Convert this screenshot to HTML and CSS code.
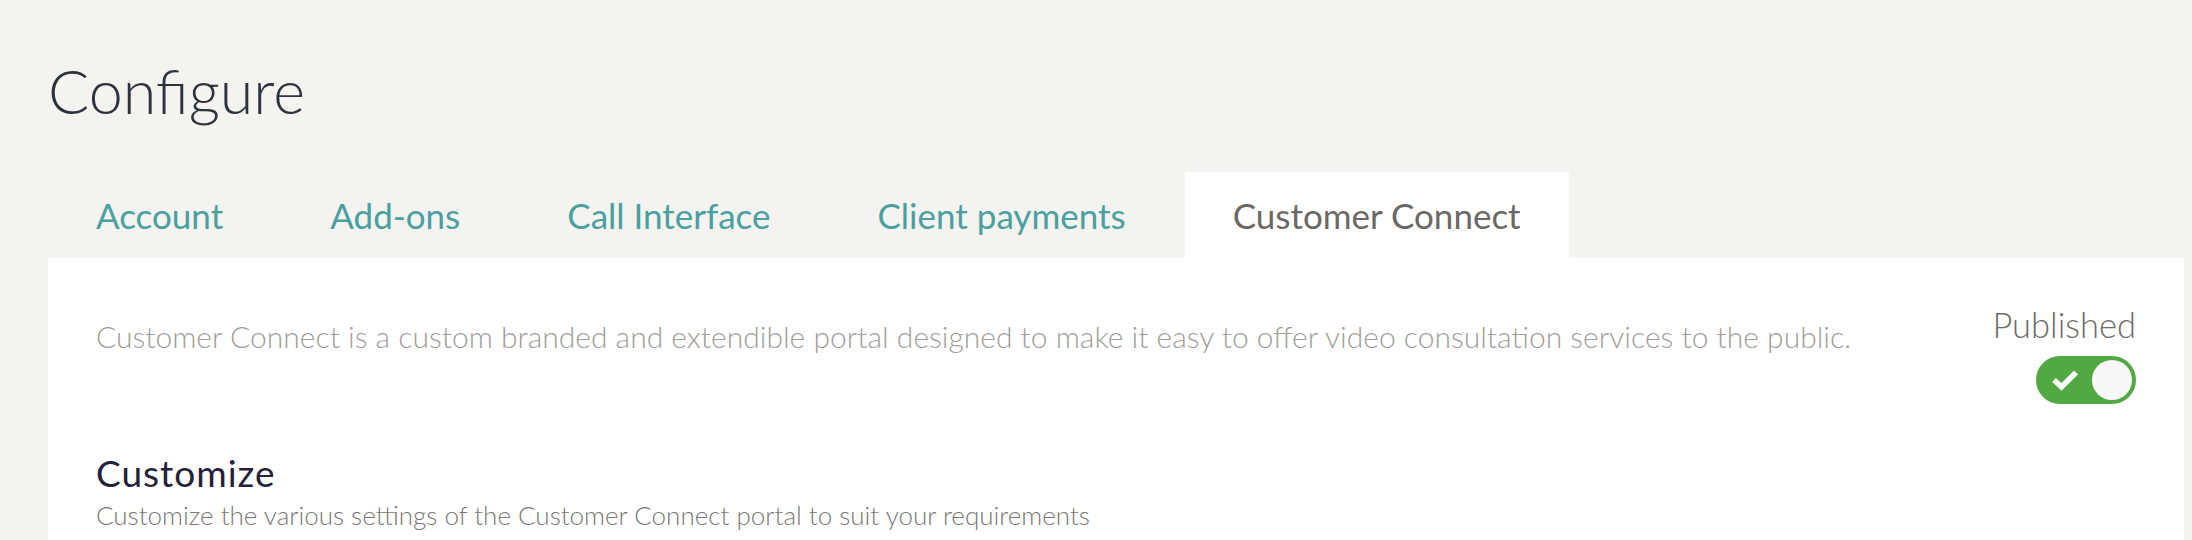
FILE: index.html
```html
<!DOCTYPE html>
<html>
<head>
<meta charset="utf-8">
<link rel="stylesheet" href="styles.css">
</head>
<body>
<div class="page">
  <h1 class="title">Configure</h1>
  <nav class="tabs">
    <a class="tab">Account</a>
    <a class="tab">Add-ons</a>
    <a class="tab">Call Interface</a>
    <a class="tab">Client payments</a>
    <a class="tab active">Customer Connect</a>
  </nav>
  <section class="panel">
    <div class="intro">
      <p class="desc">Customer Connect is a custom branded and extendible portal designed to make it easy to offer video consultation services to the public.</p>
      <div class="publish">
        <span class="publish-label">Published</span>
        <span class="toggle">
          <svg class="check" width="28" height="22" viewBox="0 0 28 22"><path d="M3 11 L10.5 18 L25 3.5" fill="none" stroke="#ffffff" stroke-width="5.5" stroke-linejoin="miter"/></svg>
          <span class="knob"></span>
        </span>
      </div>
    </div>
    <h2 class="section-title">Customize</h2>
    <p class="section-sub">Customize the various settings of the Customer Connect portal to suit your requirements</p>
  </section>
</div>
</body>
</html>
```
FILE: styles.css
```css
html, body {
  margin: 0;
  padding: 0;
  background: #f4f3f0;
  height: 540px;
  overflow: hidden;
}
.page {
  padding: 54px 8px 0 48px;
  font-family: Lato, "Open Sans", sans-serif;
}
.title {
  margin: 0;
  font-size: 61px;
  font-weight: 300;
  line-height: 1.2;
  color: #2c333e;
}
.tabs {
  display: flex;
  gap: 11px;
  margin-top: 45px;
}
.tab {
  display: block;
  padding: 0 48px;
  height: 86px;
  line-height: 86px;
  font-size: 35px;
  font-weight: 400;
  color: #4a9fa1;
}
.tab.active {
  background: #ffffff;
  color: #6a6965;
}
.panel {
  background: #ffffff;
  padding: 47px 48px 12px 48px;
}
.intro {
  display: flex;
  justify-content: space-between;
  align-items: flex-start;
}
.desc {
  margin: 13px 0 0 0;
  font-size: 30px;
  font-weight: 300;
  line-height: 1.2;
  color: #a19e98;
}
.publish {
  display: flex;
  flex-direction: column;
  align-items: flex-end;
}
.publish-label {
  font-size: 34.5px;
  font-weight: 300;
  line-height: 1.15;
  color: #6d6c69;
}
.toggle {
  margin-top: 11px;
  width: 100px;
  height: 48px;
  box-sizing: border-box;
  border-radius: 24px;
  background: #52a843;
  display: flex;
  align-items: center;
  justify-content: space-between;
  padding: 0 4px 0 15px;
}
.check {
  display: block;
}
.knob {
  width: 40px;
  height: 40px;
  border-radius: 50%;
  background: #f8f8f8;
}
.section-title {
  margin: 49px 0 0 0;
  font-size: 37px;
  font-weight: 400;
  letter-spacing: 1px;
  line-height: 40px;
  color: #22223a;
}
.section-sub {
  margin: 7px 0 0 0;
  font-size: 26px;
  font-weight: 300;
  line-height: 30px;
  color: #7a7875;
}
```
